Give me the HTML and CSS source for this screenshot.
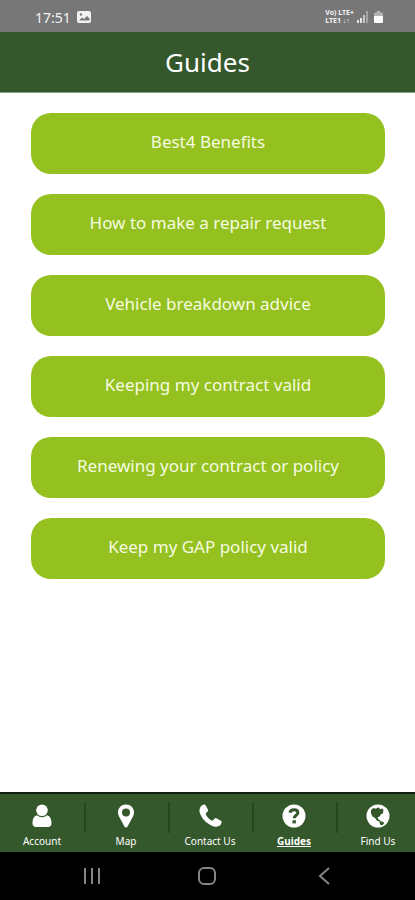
FILE: index.html
```
<!DOCTYPE html>
<html lang="en">
<head>
    <meta charset="UTF-8">
    <meta name="viewport" content="width=device-width, initial-scale=1.0">
    <title>Guides</title>
    <link rel="stylesheet" href="styles.css">
</head>
<body>
    <div class="status-bar">
        <span class="status-time">17:51</span>
        <svg class="status-picture" viewBox="0 0 14 12" aria-hidden="true">
            <rect width="14" height="12" rx="2" fill="#f2f2f2"/>
            <path d="M2 9.500l3-3 2 1.500 3-3 2.500 2.500v2z" fill="#777"/>
            <circle cx="4" cy="3.500" r="1.200" fill="#777"/>
        </svg>
        <div class="status-network">
            <span>Vo) LTE+</span>
            <span>LTE1 ↓↑</span>
        </div>
        <svg class="status-signal" viewBox="0 0 12 12" aria-hidden="true">
            <path d="M0 9h2v3H0zM3 7h2v5H3z" fill="#e6e6e6"/>
            <path d="M6 4h2v8H6z" fill="#c8c8c8"/>
            <path d="M9 0h2v12H9z" fill="#a4a4a4"/>
        </svg>
        <svg class="status-battery" viewBox="0 0 9 12" aria-hidden="true">
            <path d="M3 0h3v2H3z" fill="#bbb"/>
            <rect y="1.500" width="9" height="10.500" rx="1.500" fill="#b4b4b4"/>
            <path d="M0 5h9v5.500a1.500 1.500 0 0 1-1.500 1.500h-6A1.500 1.500 0 0 1 0 10.500z" fill="#fff"/>
        </svg>
    </div>

    <header class="header">
        <h1>Guides</h1>
    </header>

    <main class="guides">
        <button type="button" class="guide-button">Best4 Benefits</button>
        <button type="button" class="guide-button">How to make a repair request</button>
        <button type="button" class="guide-button">Vehicle breakdown advice</button>
        <button type="button" class="guide-button">Keeping my contract valid</button>
        <button type="button" class="guide-button">Renewing your contract or policy</button>
        <button type="button" class="guide-button">Keep my GAP policy valid</button>
    </main>

    <nav class="tabs">
        <a href="#account" class="tab">
            <svg viewBox="0 0 24 24" aria-hidden="true">
                <path d="M7 11.300C3.800 12 2.500 15.500 2.500 19.500c0 2.300 1.300 3.500 3.500 3.500h12c2.200 0 3.500-1.200 3.500-3.500 0-4-1.300-7.500-4.500-8.200-1.300 1.300-3 2-5 2s-3.700-.7-5-2z"/>
                <circle cx="12" cy="6.300" r="5.800"/>
            </svg>
            <span>Account</span>
        </a>
        <a href="#map" class="tab">
            <svg viewBox="0 0 24 24" aria-hidden="true">
                <path fill-rule="evenodd" d="M12 .5c-4.600 0-8 3.400-8 7.900 0 1.500.4 2.700.9 3.800l5.500 10.300c.7 1.300 2.500 1.300 3.200 0l5.500-10.300c.5-1.100.9-2.300.9-3.800C20 3.900 16.600.5 12 .5zm0 11.900a4 4 0 1 1 0-8 4 4 0 0 1 0 8z"/>
            </svg>
            <span>Map</span>
        </a>
        <a href="#contact" class="tab">
            <svg viewBox="0 0 24 24" aria-hidden="true">
                <path d="M2.200 3.500C3 1.700 4.500.8 6.600.5c.7 0 1 .8 1.400 1.500l2 3.800c.8 1.500-1.800 2.700-2.200 3.900-.2.900 1.400 3 2.500 4.200 1.300 1.300 3.300 2.900 4.400 2.600 1.100-.4 2.300-3 3.700-2.300l4 2.300c.7.400 1.300.7 1.200 1.400-.1 1.800-1 3.400-2.800 4.200-2.400 1-4.600.8-7.500-.6C7.500 18.800 4 14.500 2 9.600 1.200 7.500 1.300 5.500 2.200 3.500z"/>
            </svg>
            <span>Contact Us</span>
        </a>
        <a href="#guides" class="tab active" aria-current="page">
            <svg viewBox="0 0 24 24" aria-hidden="true">
                <circle cx="12" cy="12" r="11.500"/>
                <path class="cut-line" d="M8 8.800C8.400 6.700 10 5.800 12 5.800c2.300 0 3.900 1.200 3.900 3 0 2.400-3.700 2.600-3.700 5.500"/>
                <path class="cut" d="M10.500 16.200h3.400v3.200h-3.400z"/>
            </svg>
            <span>Guides</span>
        </a>
        <a href="#find" class="tab">
            <svg viewBox="0 0 24 24" aria-hidden="true">
                <circle cx="12" cy="12" r="11.500"/>
                <path class="cut" d="M5 6l2.500-2 2.500.8 1.500-1.300 2 .5.500 1.500 2-1.300 1.800 2.300-1 1.200.7 1.300-2.500 1.200-1.500 2.300-2 1 .8 1.800 2.200 1.200-1 1.300-2.700-1.300-1.800-2.500-2.500-1.500L5 9.500z"/>
                <path class="cut" d="M13.500 17.300l3 .2 1.800 1.300-1.300 1.900-2 .8-1.200-2z"/>
            </svg>
            <span>Find Us</span>
        </a>
    </nav>

    <div class="system-bar">
        <button type="button" aria-label="Recent apps">
            <svg viewBox="0 0 20 20"><path d="M4 2v16M11 2v16M18 2v16"/></svg>
        </button>
        <button type="button" aria-label="Home">
            <svg viewBox="0 0 20 20"><rect x="2" y="2" width="16" height="16" rx="5"/></svg>
        </button>
        <button type="button" aria-label="Back">
            <svg viewBox="0 0 20 20"><path d="M15 2L6 10l9 8"/></svg>
        </button>
    </div>
</body>
</html>
```

FILE: styles.css
```
html{
    box-sizing: border-box;
    font-family: 'Noto Sans', 'Open Sans', sans-serif;
    font-size: 16px;
}

*,
*:after,
*:before{
    box-sizing: inherit;
}

body{
    display: flex;
    flex-direction: column;
    min-height: 100vh;
    margin: 0;
    overflow-x: hidden;
    background-color: #fff;
}

button{
    border: none;
    font-family: inherit;
    cursor: pointer;
}

.status-bar{
    display: flex;
    align-items: center;
    height: 32px;
    padding: 2px 32px 0 35px;
    background-color: #777;
    color: #f2f2f2;
}

.status-time{
    font-size: 14px;
}

.status-picture{
    width: 14px;
    height: 12px;
    margin-left: 6px;
}

.status-network{
    display: flex;
    flex-direction: column;
    margin-left: auto;
    font-size: 7px;
    font-weight: bold;
    line-height: 8px;
}

.status-signal{
    width: 12px;
    height: 12px;
    margin-left: 3px;
}

.status-battery{
    width: 9px;
    height: 12px;
    margin-left: 5px;
}

.header{
    padding: 10px 0;
    border-bottom: 1px solid #86a088;
    background-color: #34572c;
    color: #fff;
    text-align: center;
}

.header h1{
    margin: 0;
    font-size: 26px;
    font-weight: normal;
    line-height: 40px;
}

.guides{
    display: flex;
    flex: 1;
    flex-direction: column;
    gap: 20px;
    padding: 20px 30px 20px 31px;
}

.guide-button{
    height: 61px;
    padding: 0 16px 4px;
    border-radius: 20px;
    background-color: #94c11f;
    color: #f6fbe0;
    font-size: 17px;
}

/* the last tab runs a little past the right edge */
.tabs{
    display: grid;
    grid-template-columns: repeat(5, 1fr);
    height: 60px;
    margin-right: -5px;
    border-top: 2px solid #111c10;
    background-color: #34572c;
}

.tab{
    position: relative;
    display: flex;
    flex-direction: column;
    align-items: center;
    gap: 6px;
    padding-top: 10px;
    color: #fff;
    font-size: 10px;
    line-height: 14px;
    text-decoration: none;
}

/* separator between two tabs */
.tab + .tab:before{
    content: "";
    position: absolute;
    top: 8px;
    left: 0;
    width: 2px;
    height: 31px;
    background-color: #29451f;
}

.tab svg{
    width: 24px;
    height: 24px;
    fill: #fff;
}

.tab .cut{
    fill: #34572c;
}

.tab .cut-line{
    fill: none;
    stroke: #34572c;
    stroke-width: 3;
}

.tab.active{
    font-weight: bold;
}

.tab.active span{
    text-decoration: underline;
}

.system-bar{
    display: grid;
    grid-template-columns: repeat(3, 1fr);
    height: 48px;
    padding: 0 33px;
    background-color: #000;
}

.system-bar button{
    display: flex;
    align-items: center;
    justify-content: center;
    padding: 0;
    background: none;
}

.system-bar svg{
    width: 20px;
    height: 20px;
    fill: none;
    stroke: #858585;
    stroke-width: 2;
}
```
